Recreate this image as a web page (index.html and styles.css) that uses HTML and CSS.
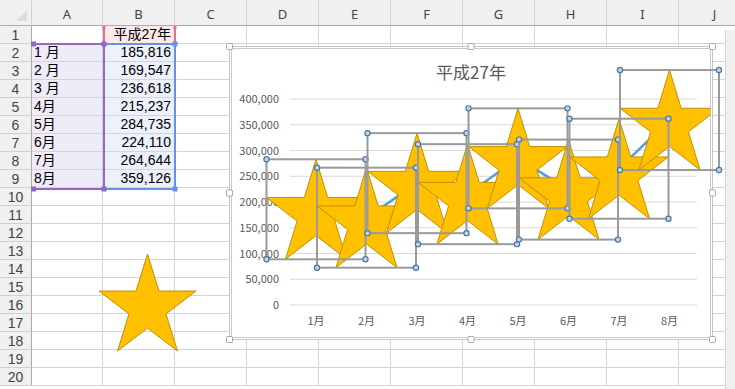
FILE: index.html
```html
<!DOCTYPE html>
<html lang="ja">
<head>
  <meta charset="UTF-8" />
  <title>平成27年</title>
  <link rel="stylesheet" href="styles.css">
</head>
<body>
  <div class="app">
    <div class="sheet" id="sheet"></div>

    <!-- range highlights + loose shape -->
    <svg class="overlay" width="735" height="389" viewBox="0 0 735 389">
      <g class="rng-name">
        <line x1="104" y1="26" x2="104" y2="44" />
        <line x1="175" y1="26" x2="175" y2="44" />
        <rect x="102.5" y="26" width="3" height="3" />
        <rect x="173.5" y="26" width="3" height="3" />
      </g>
      <g class="rng-val">
        <polyline points="104,44 175,44 175,189 104,189" />
        <rect x="172.5" y="41.5" width="5" height="5" />
        <rect x="172.5" y="186.5" width="5" height="5" />
      </g>
      <g class="rng-cat">
        <polyline points="32,44 104,44 104,189 32,189" />
        <rect x="31" y="41.5" width="5" height="5" />
        <rect x="101.5" y="41.5" width="5" height="5" />
        <rect x="31" y="186.5" width="5" height="5" />
        <rect x="101.5" y="186.5" width="5" height="5" />
      </g>
      <polygon class="star" transform="translate(99 254) scale(0.97 0.97)"
        points="50,0 61.8,38.2 100,38.2 69.1,61.8 80.9,100 50,76.4 19.1,100 30.9,61.8 0,38.2 38.2,38.2" />
    </svg>

    <svg class="chart" width="510" height="300" viewBox="226 43 510 300">
      <defs>
        <polygon id="star" points="50,0 61.8,38.2 100,38.2 69.1,61.8 80.9,100 50,76.4 19.1,100 30.9,61.8 0,38.2 38.2,38.2" />
        <clipPath id="chart-clip">
          <rect x="232" y="49" width="478.5" height="288" />
        </clipPath>
      </defs>
      <rect class="frame" x="229.5" y="46.5" width="483" height="293" />
      <rect class="frame-inner" x="231.5" y="48.5" width="479" height="289" />
      <text class="title" x="471" y="79">平成27年</text>
      <g id="plot"></g>
      <g id="frame-handles"></g>
    </svg>

    <div class="vscroll"></div>
  </div>

  <script>
    const data = [
      ['1 月', 185816], ['2 月', 169547], ['3 月', 236618], ['4月', 215237],
      ['5月', 284735], ['6月', 224110], ['7月', 264644], ['8月', 359126]
    ];
    const cols = 'ABCDEFGHIJ'.split('');

    // sheet grid
    let html = '<div class="row head"><div class="corner"></div>';
    cols.forEach(c => { html += `<div class="ch col-${c.toLowerCase()}">${c}</div>`; });
    html += '</div>';
    for (let r = 1; r <= 20; r++) {
      html += `<div class="row"><div class="rh">${r}</div>`;
      cols.forEach(c => {
        let cls = 'cell col-' + c.toLowerCase();
        let txt = '';
        if (r === 1 && c === 'B') { cls += ' name num'; txt = '平成27年'; }
        if (r >= 2 && r <= 9) {
          const d = data[r - 2];
          if (c === 'A') { cls += ' cat'; txt = d[0]; }
          if (c === 'B') { cls += ' val num'; txt = d[1].toLocaleString('en-US'); }
        }
        html += `<div class="${cls}">${txt}</div>`;
      });
      html += '</div>';
    }
    document.getElementById('sheet').innerHTML = html;

    // chart
    const yOf = v => 305 - v * 206 / 400000;
    const xOf = i => 316 + i * 50.5;
    let svg = '';
    for (let k = 0; k <= 8; k++) {
      const v = k * 50000;
      const y = yOf(v);
      svg += `<line class="grid" x1="290" y1="${y}" x2="697" y2="${y}" />`;
      svg += `<text class="ylab" x="279" y="${y + 4}">${v.toLocaleString('en-US')}</text>`;
    }
    data.forEach((d, i) => {
      svg += `<text class="xlab" x="${xOf(i)}" y="325">${d[0].replace(' ', '')}</text>`;
    });
    svg += `<polyline class="series" points="${data.map((d, i) => xOf(i) + ',' + yOf(d[1])).join(' ')}" />`;

    let stars = '<g clip-path="url(#chart-clip)">';
    let boxes = '';
    data.forEach((d, i) => {
      const x0 = xOf(i) - 49.5;
      const y0 = yOf(d[1]) - 50;
      stars += `<use href="#star" class="star" transform="translate(${x0} ${y0}) scale(0.99 1)" />`;
      boxes += `<rect class="box" x="${x0}" y="${y0}" width="99" height="100" />`;
      [[x0, y0], [x0 + 99, y0], [x0, y0 + 100], [x0 + 99, y0 + 100]].forEach(p => {
        boxes += `<circle class="pt" cx="${p[0]}" cy="${p[1]}" r="2.6" />`;
      });
    });
    stars += '</g>';
    document.getElementById('plot').innerHTML = svg + stars + boxes;

    let handles = '';
    [[229.5, 46.5], [471, 46.5], [712.5, 46.5], [229.5, 193], [712.5, 193],
     [229.5, 339.5], [471, 339.5], [712.5, 339.5]].forEach(p => {
      handles += `<rect class="handle" x="${p[0] - 3}" y="${p[1] - 3}" width="6" height="6" rx="1" />`;
    });
    document.getElementById('frame-handles').innerHTML = handles;
  </script>
</body>
</html>
```

FILE: styles.css
```css
body {
  margin: 0;
  padding: 0;
  background: #fff;
  overflow: hidden;
  font-family: "Noto Sans CJK JP", "Noto Sans", sans-serif;
}

.app {
  position: relative;
  width: 735px;
  height: 389px;
  overflow: hidden;
}

.sheet {
  display: flex;
  flex-direction: column;
  width: 760px;
}

.row {
  display: flex;
  height: 18px;
}

.row.head {
  height: 26px;
}

.corner {
  flex: 0 0 32px;
  box-sizing: border-box;
  display: flex;
  justify-content: flex-end;
  align-items: flex-end;
  padding: 0 4px 4px 0;
  background: #f0f0f0;
  border-right: 1px solid #d0d0d0;
  border-bottom: 1px solid #ababab;
}

.corner::after {
  content: "";
  width: 0;
  height: 0;
  border-left: 11px solid transparent;
  border-bottom: 11px solid #dcdcdc;
}

.ch {
  flex: 0 0 72px;
  box-sizing: border-box;
  background: #f0f0f0;
  border-right: 1px solid #d0d0d0;
  border-bottom: 1px solid #ababab;
  color: #444;
  font-family: "Noto Sans", sans-serif;
  font-size: 13px;
  line-height: 22px;
  padding-top: 3px;
  text-align: center;
}

.rh {
  flex: 0 0 32px;
  box-sizing: border-box;
  background: #f0f0f0;
  border-right: 1px solid #ababab;
  border-bottom: 1px solid #d0d0d0;
  color: #444;
  font-family: "Liberation Sans", sans-serif;
  font-size: 14px;
  line-height: 18px;
  text-align: center;
}

.cell {
  flex: 0 0 72px;
  box-sizing: border-box;
  border-right: 1px solid #d4d4d4;
  border-bottom: 1px solid #d4d4d4;
  padding: 0 2px;
  font-family: "Liberation Sans", "Noto Sans CJK JP", sans-serif;
  font-size: 14px;
  line-height: 17px;
  color: #000;
  white-space: nowrap;
}

.col-a {
  flex-basis: 71px;
}

.num {
  text-align: right;
  padding-right: 3px;
}

.cell.name {
  background: #fce9e9;
}

.cell.cat {
  background: #efecf7;
}

.cell.val {
  background: #ecf1fb;
}

.overlay {
  position: absolute;
  left: 0;
  top: 0;
  pointer-events: none;
}

.rng-name line {
  stroke: #e8707a;
  stroke-width: 2;
}

.rng-name rect {
  fill: #e8707a;
}

.rng-cat polyline {
  fill: none;
  stroke: #8e69c8;
  stroke-width: 2;
}

.rng-cat rect {
  fill: #8e69c8;
}

.rng-val polyline {
  fill: none;
  stroke: #6592e8;
  stroke-width: 2;
}

.rng-val rect {
  fill: #6592e8;
}

.star {
  fill: #ffc000;
  stroke: #bf9000;
  stroke-width: 1;
  vector-effect: non-scaling-stroke;
}

.chart {
  position: absolute;
  left: 226px;
  top: 43px;
  overflow: visible;
}

.frame {
  fill: #fff;
  stroke: #c6c6c6;
  stroke-width: 1;
}

.frame-inner {
  fill: none;
  stroke: #c9c9c9;
  stroke-width: 1;
}

.handle {
  fill: #fff;
  stroke: #a8a8a8;
  stroke-width: 1;
}

.title {
  fill: #595959;
  font-size: 17px;
  text-anchor: middle;
}

.grid {
  stroke: #d9d9d9;
  stroke-width: 1;
}

.ylab {
  fill: #595959;
  font-size: 11px;
  text-anchor: end;
}

.xlab {
  fill: #595959;
  font-size: 11px;
  text-anchor: middle;
}

.series {
  fill: none;
  stroke: #5b9bd5;
  stroke-width: 2.5;
  stroke-linejoin: round;
}

.box {
  fill: none;
  stroke: #9a9a9a;
  stroke-width: 2;
}

.pt {
  fill: #c3d5ea;
  stroke: #4a77a6;
  stroke-width: 1.2;
}

.vscroll {
  position: absolute;
  left: 725px;
  top: 30px;
  bottom: 0;
  width: 10px;
  background: #f0f0f0;
  border-left: 1px solid #d6d6d6;
}
```
